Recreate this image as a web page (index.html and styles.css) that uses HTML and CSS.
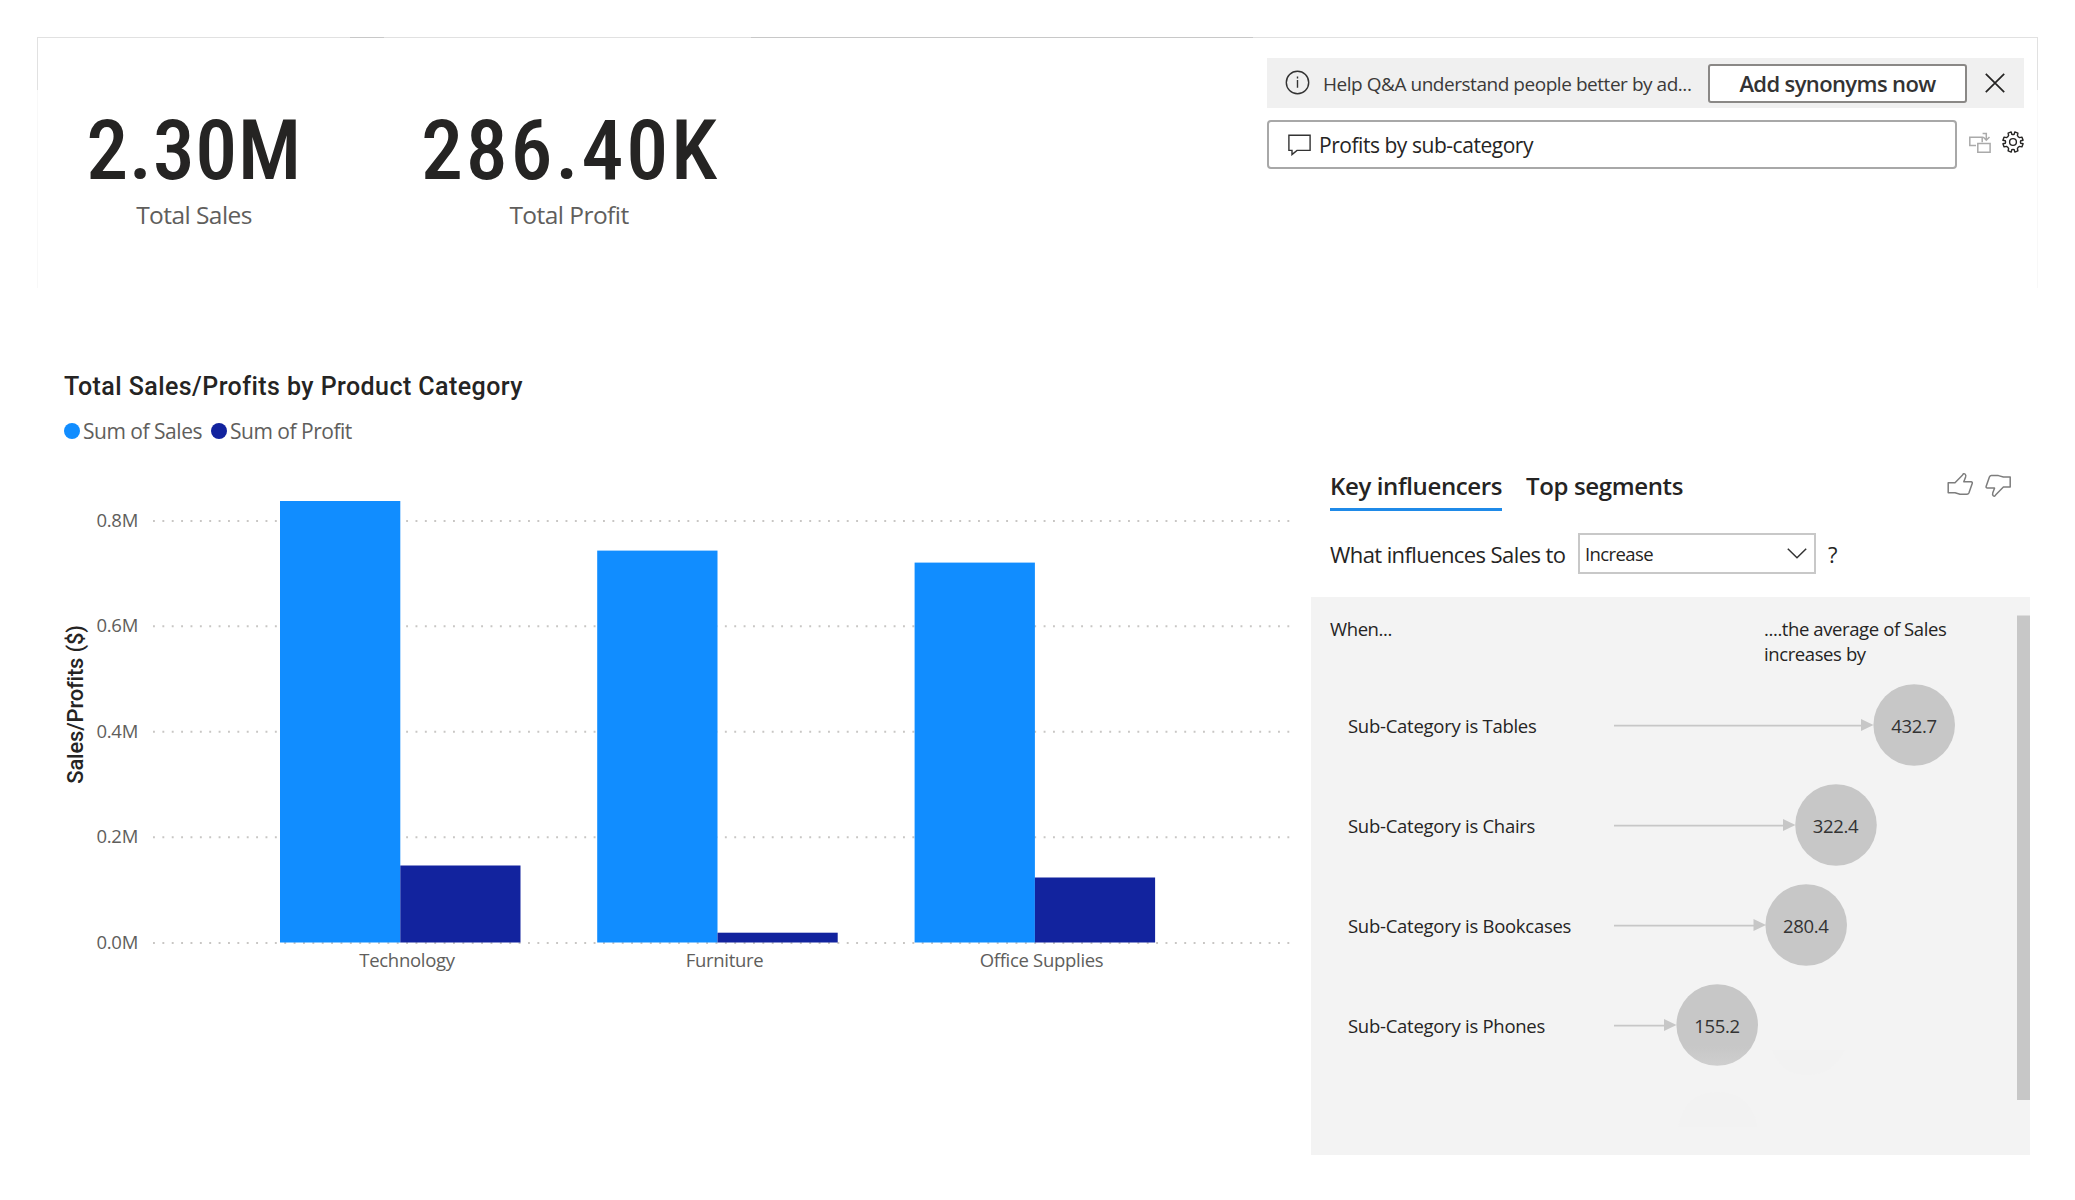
FILE: index.html
```html
<!DOCTYPE html>
<html lang="en">
<head>
<meta charset="utf-8">
<title>Sales dashboard</title>
<link rel="stylesheet" href="styles.css">
</head>
<body>
<main class="report">
  <header class="top">
    <section class="kpis">
      <div class="kpi">
        <div class="kpi-value">2.30M</div>
        <div class="kpi-label">Total Sales</div>
      </div>
      <div class="kpi">
        <div class="kpi-value kpi-value-wide">286.40K</div>
        <div class="kpi-label">Total Profit</div>
      </div>
    </section>
    <section class="qna">
      <div class="tip">
        <svg class="tip-icon" width="25" height="25" viewBox="0 0 25 25" fill="none" stroke="#333" stroke-width="1.4"><circle cx="12.5" cy="12.5" r="11.2"/><path d="M12.5 10v7.8M12.5 6.6v1.8"/></svg>
        <span class="tip-text">Help Q&amp;A understand people better by ad...</span>
        <button class="tip-button">Add synonyms now</button>
        <svg class="tip-close" width="20" height="20" viewBox="0 0 20 20" fill="none" stroke="#252423" stroke-width="1.7"><path d="M.8.8l18.4 18.4M19.2.8L.8 19.2"/></svg>
      </div>
      <div class="ask">
        <div class="ask-box">
          <svg width="23" height="22" viewBox="0 0 23 22" fill="none" stroke="#333" stroke-width="1.4"><path d="M.9 1.2h21.2v15.2H9l-5 4.2v-4.2H.9z"/></svg>
          <span>Profits by sub-category</span>
        </div>
        <svg class="ask-convert" width="22" height="22" viewBox="0 0 22 22" fill="none" stroke="#aaa" stroke-width="1.5"><path d="M7 13.6H.8V5.2h12.4v5.1"/><path d="M8.8 11.6h12.3v8.6H8.8z"/><path d="M13.6 1.4h3.7v6.7M14.2 5l3.1 3.2L20.5 5"/></svg>
        <svg class="ask-gear" width="22" height="22" viewBox="-11 -11 22 22" fill="none" stroke="#252423" stroke-width="1.4" stroke-linejoin="round"><circle r="3.4"/><path id="gear" d="M-1.8-10.1L-1.2-7.7Q0-7.2 1.2-7.7L1.8-10.1 4.900-8.900 4.400-6.500Q5-5 6.500-4.400L8.900-4.900 10.100-1.800 7.700-1.200Q7.200 0 7.700 1.200L10.100 1.800 8.900 4.900 6.500 4.400Q5 5 4.400 6.500L4.900 8.900 1.800 10.100 1.200 7.700Q0 7.200-1.200 7.700L-1.800 10.100-4.900 8.900-4.400 6.500Q-5 5-6.500 4.400L-8.900 4.900-10.100 1.800-7.700 1.200Q-7.200 0-7.700-1.200L-10.100-1.800-8.900-4.900-6.500-4.400Q-5-5-4.400-6.500L-4.900-8.900z"/></svg>
      </div>
    </section>
  </header>

  <div class="bottom">
    <section class="sales">
      <h2 class="sales-title">Total Sales/Profits by Product Category</h2>
      <div class="legend">
        <span class="legend-item"><i class="dot dot-sales"></i>Sum of Sales</span>
        <span class="legend-item"><i class="dot dot-profit"></i>Sum of Profit</span>
      </div>
      <svg class="chart" width="1240" height="520" viewBox="60 470 1240 520">
        <g class="grid-lines">
          <path d="M153 521H1290M153 626.3H1290M153 731.8H1290M153 837.3H1290M153 943H1290"/>
        </g>
        <g class="axis-label" text-anchor="end">
          <text x="138" y="527">0.8M</text>
          <text x="138" y="632">0.6M</text>
          <text x="138" y="738">0.4M</text>
          <text x="138" y="843">0.2M</text>
          <text x="138" y="949">0.0M</text>
        </g>
        <g fill="#118dff">
          <rect x="280" y="501" width="120.3" height="441.5"/>
          <rect x="597.2" y="550.6" width="120.3" height="391.9"/>
          <rect x="914.6" y="562.6" width="120.3" height="379.9"/>
        </g>
        <g fill="#12239e">
          <rect x="400.3" y="865.5" width="120.2" height="77"/>
          <rect x="717.5" y="932.7" width="120.2" height="9.8"/>
          <rect x="1034.9" y="877.5" width="120.2" height="65"/>
        </g>
        <g class="axis-label" text-anchor="middle">
          <text x="407" y="967">Technology</text>
          <text x="724.5" y="967">Furniture</text>
          <text x="1041.5" y="967">Office Supplies</text>
        </g>
        <text class="axis-title" text-anchor="middle" transform="translate(83 704.5) rotate(-90)">Sales/Profits ($)</text>
      </svg>
    </section>

    <section class="influencers">
      <nav class="tabs">
        <span class="tab tab-active">Key influencers</span>
        <span class="tab">Top segments</span>
        <svg class="thumbs" width="66" height="28" viewBox="0 0 66 28" fill="none" stroke="#7d7d7d" stroke-width="1.5" stroke-linejoin="round"><path id="thumb" d="M1.2 10.8H8L15.6 3Q16.5 1 18 2Q19.300 3 18.600 5L16.800 9.700H24Q25.600 10 25.300 11.300L21.900 21Q21.300 22.200 20 22.200H13L8 20.800H1.200z"/><use href="#thumb" transform="rotate(180 32.2 12.9)"/></svg>
      </nav>
      <div class="question">
        <span class="question-text">What influences Sales to</span>
        <div class="select"><span>Increase</span><svg width="20" height="11" viewBox="0 0 20 11" fill="none" stroke="#333" stroke-width="1.5"><path d="M.8.8L10 9.8 19.2.8"/></svg></div>
        <span>?</span>
      </div>
      <svg class="plot" width="719" height="558" viewBox="1311 597 719 558">
        <defs>
          <linearGradient id="fade" gradientUnits="userSpaceOnUse" x1="0" y1="1046" x2="0" y2="1070">
            <stop offset="0" stop-color="#c7c7c7"/><stop offset="1" stop-color="#d0d0d0"/>
          </linearGradient>
        </defs>
        <rect x="2017" y="615.5" width="13" height="484.5" fill="#c7c7c7"/>
        <g class="plot-text">
          <text x="1330" y="636">When...</text>
          <text x="1764" y="636">....the average of Sales</text>
          <text x="1764" y="661">increases by</text>
        </g>
        <g class="plot-text factor">
          <text x="1348" y="733">Sub-Category is Tables</text>
          <text x="1348" y="833">Sub-Category is Chairs</text>
          <text x="1348" y="933">Sub-Category is Bookcases</text>
          <text x="1348" y="1033">Sub-Category is Phones</text>
        </g>
        <path stroke="#c7c7c7" stroke-width="1.8" d="M1614 725.6H1862M1614 825.6H1784M1614 925.6H1755M1614 1025.6H1665"/>
        <path fill="#c7c7c7" d="M1861 719l12.5 6-12.5 6zM1783 819l12.5 6-12.5 6zM1753.5 919l12.5 6-12.5 6zM1664 1019l12.5 6-12.5 6z"/>
        <g fill="#c7c7c7">
          <circle cx="1914.2" cy="725" r="40.8"/>
          <circle cx="1836" cy="825" r="40.8"/>
          <circle cx="1806.2" cy="925" r="40.8"/>
          <circle cx="1717.2" cy="1025" r="40.8" fill="url(#fade)"/>
        </g>
        <path fill="#f2f2f2" d="M1772 1050H1845Q1833 1075 1807 1075Q1782 1075 1772 1050zM1678 1127Q1685 1092 1717 1092Q1750 1092 1758 1127z"/>
        <g class="plot-value" text-anchor="middle">
          <text x="1914" y="733">432.7</text>
          <text x="1835.5" y="833">322.4</text>
          <text x="1805.7" y="933">280.4</text>
          <text x="1717" y="1033">155.2</text>
        </g>
      </svg>
    </section>
  </div>
</main>
</body>
</html>
```
FILE: styles.css
```css
* {
  box-sizing: border-box;
}

body {
  margin: 0;
  width: 2075px;
  height: 1200px;
  overflow: hidden;
  background: #fff;
  color: #252423;
  font-family: "Open Sans", "Noto Sans", sans-serif;
}

.report {
  margin: 37px 37px 0;
  width: 2001px;
  height: 1130px;
  background:
    linear-gradient(#c8c8c8, #c8c8c8) 313px 0 / 34px 1px no-repeat,
    linear-gradient(#c8c8c8, #c8c8c8) 714px 0 / 502px 1px no-repeat,
    linear-gradient(#e1e1e1, #e1e1e1) 0 0 / 100% 1px no-repeat,
    linear-gradient(#e1e1e1 53px, #f8f8f8 53px, #f8f8f8 251px, #fff 251px) 0 0 / 1px 100% no-repeat,
    linear-gradient(#e1e1e1 53px, #f8f8f8 53px, #f8f8f8 251px, #fff 251px) 100% 0 / 1px 100% no-repeat;
}

.top {
  display: flex;
  justify-content: space-between;
  height: 325px;
  padding: 21px 14px 0 7px;
}

.kpis {
  display: flex;
  gap: 75px;
  padding-top: 51px;
}

.kpi {
  width: 300px;
  text-align: center;
  white-space: nowrap;
}

.kpi-value {
  font: 500 84px/84px Roboto, sans-serif;
  font-stretch: 75%;
  letter-spacing: .5px;
}

.kpi-value-wide {
  letter-spacing: 2.8px;
  margin-right: -3px;
}

.kpi-label {
  margin-top: 5px;
  font-size: 24.5px;
  line-height: 34px;
  letter-spacing: -.55px;
  color: #605e5c;
}

.qna {
  width: 757px;
}

.tip {
  display: flex;
  align-items: center;
  height: 50px;
  padding-left: 18px;
  background: #f0f0f0;
}

.tip-icon {
  margin-bottom: 2px;
}

.tip-text {
  width: 385px;
  padding: 2px 0 0 13px;
  font-size: 19px;
  letter-spacing: -.46px;
  color: #3b3a39;
  white-space: nowrap;
}

.tip-button {
  width: 259px;
  height: 39px;
  margin: 0 18px 0 13px;
  padding: 0;
  border: 2px solid #8a8886;
  border-radius: 3px;
  background: #fff;
  color: #333;
  font: 600 22px/34px "Open Sans", sans-serif;
  letter-spacing: -.62px;
}

.ask {
  display: flex;
  align-items: center;
  margin-top: 12px;
}

.ask-box {
  display: flex;
  align-items: center;
  gap: 8px;
  width: 690px;
  height: 49px;
  padding: 1px 0 0 19px;
  border: 2px solid #a8a8a8;
  border-radius: 4px;
  font-size: 21px;
  letter-spacing: -.46px;
}

.ask-convert {
  margin: 0 11px 4px 12px;
}

.ask-gear {
  margin-bottom: 5px;
}

.bottom {
  display: flex;
}

.sales {
  width: 1274px;
  padding: 10px 0 0 23px;
}

.sales-title {
  margin: 0 0 0 4px;
  font: 500 25px/30px Roboto, sans-serif;
  letter-spacing: .43px;
}

.legend {
  display: flex;
  gap: 9px;
  margin: 13px 0 0 4px;
  font-size: 21px;
  line-height: 32px;
  letter-spacing: -.48px;
  color: #605e5c;
}

.legend-item {
  display: flex;
  align-items: center;
  gap: 3px;
}

.dot {
  width: 16px;
  height: 16px;
  border-radius: 50%;
}

.dot-sales {
  background: #118dff;
}

.dot-profit {
  background: #12239e;
}

.chart {
  display: block;
  margin-top: 23px;
}

.grid-lines path {
  stroke: #c8c6c4;
  stroke-width: 1.9;
  stroke-dasharray: 1.9 7.475;
}

.axis-label {
  font-size: 18.5px;
  letter-spacing: -.3px;
  fill: #605e5c;
}

.axis-title {
  font: 500 22px Roboto, sans-serif;
  letter-spacing: -.2px;
  fill: #252423;
}

.influencers {
  width: 719px;
  padding-top: 108px;
}

.tabs {
  display: flex;
  height: 41px;
  padding-left: 19px;
  font-size: 24px;
  line-height: 32px;
  font-weight: 600;
  letter-spacing: -.37px;
}

.tab {
  margin-right: 24px;
}

.tab-active {
  border-bottom: 3px solid #1f8ae8;
}

.thumbs {
  margin: 2px 17px 0 auto;
}

.question {
  display: flex;
  align-items: center;
  height: 41px;
  margin-top: 22px;
  padding-left: 19px;
  font-size: 22px;
}

.question-text {
  width: 236px;
  letter-spacing: -.59px;
  white-space: nowrap;
}

.select {
  display: flex;
  align-items: center;
  justify-content: space-between;
  width: 238px;
  height: 41px;
  margin: 0 12px;
  padding: 0 7px 0 5px;
  border: 2px solid #c8c8c8;
  font-size: 18.5px;
  letter-spacing: -.6px;
}

.plot {
  display: block;
  margin-top: 23px;
  background: #f3f3f3;
}

.plot-text {
  font-size: 18.5px;
  letter-spacing: -.4px;
  fill: #252423;
}

.factor {
  letter-spacing: -.27px;
}

.plot-value {
  font-size: 18.5px;
  letter-spacing: -.35px;
  fill: #333;
}
```
